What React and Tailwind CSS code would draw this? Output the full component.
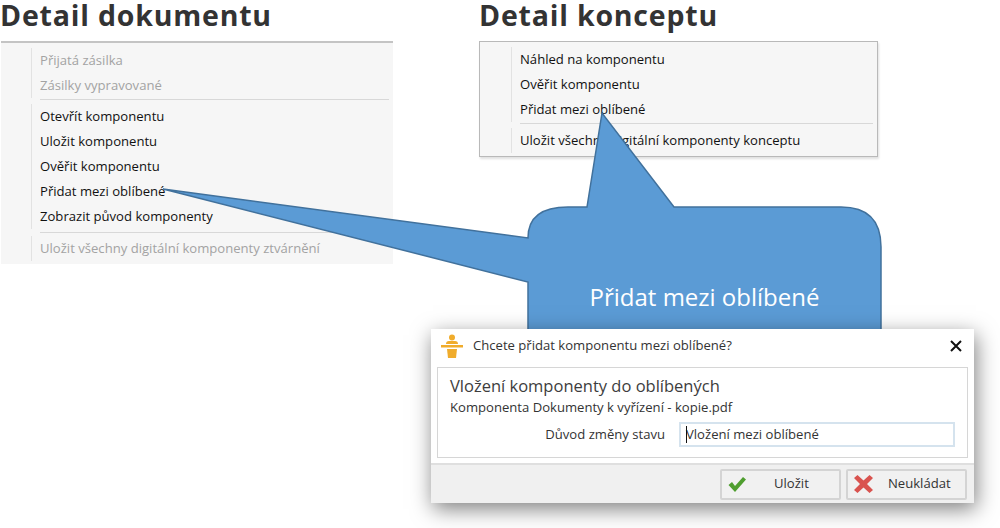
import React from 'react';

const font = { fontFamily: '"Open Sans", "Noto Sans", sans-serif' };

const MenuRow = ({ children, disabled }) => (
  <div className={`h-[25px] flex items-center pl-[8px] text-[13.1px] ${disabled ? 'text-[#a3a3a3]' : 'text-[#111]'}`}>
    {children}
  </div>
);

const MenuGroup = ({ items, disabled, indent }) => (
  <div className={`${indent} border-l border-[#e2e2e2]`}>
    {items.map((item) => (
      <MenuRow key={item} disabled={disabled}>{item}</MenuRow>
    ))}
  </div>
);

const Separator = ({ margin }) => <div className={`${margin} h-px bg-[#d8d8d8]`}></div>;

const Callout = () => (
  <svg className="absolute left-0 top-0" width="1000" height="528" viewBox="0 0 1000 528">
    <path
      d="M163 189 L528 238 Q528 207 568 207 L587 207 L602 113 L674 207 L841 207 Q881 207 881 247 L881 400 L528 400 L528 282 Z"
      fill="#5b9bd5"
      stroke="#41719c"
      strokeWidth="1.5"
    />
  </svg>
);

const App = () => {
  return (
    <div className="relative w-[1000px] h-[528px] bg-white overflow-hidden" style={font}>
      <div className="flex">
        {/* Detail dokumentu */}
        <div className="w-[479px] shrink-0">
          <h1 className="h-[41px] text-[28.5px] leading-[30px] tracking-[0.8px] font-bold text-[#333]">Detail dokumentu</h1>
          <div className="ml-px w-[392px] h-[223px] bg-[#f6f6f6] border-t-2 border-[#c4c4c4] pt-[5px]">
            <MenuGroup indent="ml-[30px]" disabled items={['Přijatá zásilka', 'Zásilky vypravované']} />
            <Separator margin="ml-[39px] mr-[4px] mt-px mb-[4px]" />
            <MenuGroup
              indent="ml-[30px]"
              items={['Otevřít komponentu', 'Uložit komponentu', 'Ověřit komponentu', 'Přidat mezi oblíbené', 'Zobrazit původ komponenty']}
            />
            <Separator margin="ml-[39px] mr-[4px] mt-[3px] mb-[3px]" />
            <MenuGroup indent="ml-[30px]" disabled items={['Uložit všechny digitální komponenty ztvárnění']} />
          </div>
        </div>

        {/* Detail konceptu */}
        <div className="w-[399px] shrink-0">
          <h1 className="h-[41px] text-[28.5px] leading-[30px] tracking-[0.8px] font-bold text-[#333]">Detail konceptu</h1>
          <div className="w-[399px] h-[116px] bg-[#f6f6f6] border border-[#b9b9b9] pt-[5px] shadow-[1px_2px_2px_rgba(0,0,0,0.12)]">
            <MenuGroup indent="ml-[31px]" items={['Náhled na komponentu', 'Ověřit komponentu', 'Přidat mezi oblíbené']} />
            <Separator margin="ml-[40px] mr-[4px] mt-px mb-[4px]" />
            <MenuGroup indent="ml-[31px]" items={['Uložit všechny digitální komponenty konceptu']} />
          </div>
        </div>
      </div>

      <Callout />
      <div className="absolute left-[528px] top-[281px] w-[353px] text-center text-[24px] leading-[32px] text-white">
        Přidat mezi oblíbené
      </div>

      {/* Dialog */}
      <div className="absolute left-[431px] top-[329px] w-[543px] h-[174px] bg-white flex flex-col shadow-[2px_6px_20px_rgba(0,0,0,0.5)]">
        <div className="h-[34px] shrink-0 flex items-center pl-[10px] pr-[12px]">
          <svg width="22" height="25" viewBox="0 0 22 25" fill="#f0ac2c">
            <circle cx="11" cy="3.5" r="3" />
            <path d="M5 10 Q5 7 8 7 L14 7 Q17 7 17 10 Z" />
            <path d="M0 11 L22 11 L22 13.5 L0 13.5 Z" />
            <path d="M6 15 L16 15 L15 24 L7 24 Z" />
          </svg>
          <span className="ml-[10px] text-[13.1px] text-[#333]">Chcete přidat komponentu mezi oblíbené?</span>
          <svg className="ml-auto" width="12" height="12" viewBox="0 0 12 12" stroke="#111" strokeWidth="2">
            <path d="M1 1 L11 11 M11 1 L1 11" />
          </svg>
        </div>
        <div className="mx-[6px] mt-[4px] h-[91px] shrink-0 border border-[#d6d6d6] pl-[12px] pr-[12px] pt-[7px]">
          <div className="text-[16.5px] leading-[22px] text-[#3d3d3d]">Vložení komponenty do oblíbených</div>
          <div className="mt-px text-[13.1px] leading-[18px] text-[#333]">Komponenta Dokumenty k vyřízení - kopie.pdf</div>
          <div className="flex items-center justify-end mt-[6px]">
            <span className="mr-[14px] text-[13.1px] text-[#333]">Důvod změny stavu</span>
            <div className="relative w-[276px] h-[25px] border-2 border-[#d5e3ee] flex items-center pl-[5px] text-[13.1px] text-[#333]">
              <span className="absolute left-[5px] top-[2px] w-px h-[17px] bg-[#111]"></span>
              Vložení mezi oblíbené
            </div>
          </div>
        </div>
        <div className="mt-[5px] flex-1 bg-[#f0f0f0] border-t-2 border-[#dfdfdf] flex items-center justify-end pr-[7px] gap-[5px]">
          <button className="w-[121px] h-[31px] bg-[#f1f1f1] border-2 border-[#d4d4d4] rounded-[2px] flex items-center pl-[5px] text-[13.1px] text-[#333]">
            <svg width="20" height="18" viewBox="0 0 20 18">
              <path d="M1.5 10 L5 7 L8 11 L16 2 L19 4.5 L8 17 Z" fill="#4f9e2f" />
            </svg>
            <span className="ml-[27px]">Uložit</span>
          </button>
          <button className="w-[121px] h-[31px] bg-[#f1f1f1] border-2 border-[#d4d4d4] rounded-[2px] flex items-center pl-[5px] text-[13.1px] text-[#333]">
            <svg width="21" height="20" viewBox="0 0 21 20">
              <path d="M1 4 L4.5 1 L10.5 6.5 L16.5 1 L20 4 L14 10 L20 16 L16.5 19 L10.5 13.5 L4.5 19 L1 16 L7 10 Z" fill="#d9534f" />
            </svg>
            <span className="ml-[14px]">Neukládat</span>
          </button>
        </div>
      </div>
    </div>
  );
};

export default App;
